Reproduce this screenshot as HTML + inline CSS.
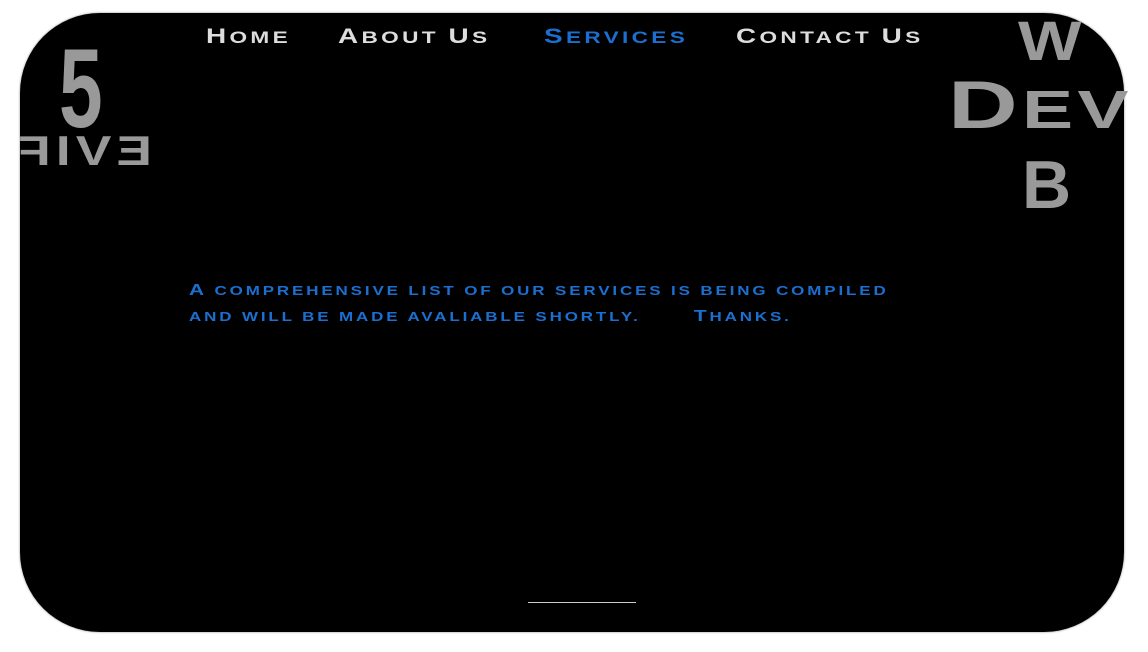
<!DOCTYPE html>
<html><head><meta charset="utf-8"><style>
html,body{margin:0;padding:0;background:#fff;width:1148px;height:652px;overflow:hidden;position:relative;font-family:"Liberation Sans",sans-serif}
.box{position:absolute;left:20px;top:13px;width:1104px;height:619px;background:#000;border-radius:80px;box-shadow:0 0 2px #888}
.t{position:absolute;white-space:nowrap;text-transform:uppercase;transform-origin:0 0}
.nav{top:25px;font-size:17px;color:#ddd;letter-spacing:2.5px;transform:scaleX(1.33);font-weight:bold}
.nav i{font-style:normal;font-size:21px}
.b{color:#1b6fd0}
.p{font-size:13px;color:#1b6fd0;letter-spacing:2.2px;transform:scaleX(1.305);font-weight:bold}
.p i{font-style:normal;font-size:16px}
.g{position:absolute;color:#999;white-space:nowrap;transform-origin:0 0}
</style></head><body>
<div class="box"></div>
<div class="t nav" style="left:206px"><i>H</i>ome</div>
<div class="t nav" style="left:338px"><i>A</i>bout <i>U</i>s</div>
<div class="t nav b" style="left:544px"><i>S</i>ervices</div>
<div class="t nav" style="left:736px"><i>C</i>ontact <i>U</i>s</div>
<div class="g" style="left:59px;top:24px;font-size:112px;font-weight:bold;transform:scaleX(0.7);font-family:'Liberation Sans Narrow','Liberation Sans',sans-serif">5</div>
<div class="g" style="left:152px;top:127px;font-size:42px;transform:scaleX(-1.27);font-weight:bold;letter-spacing:4px">EVIF</div>
<div class="g" style="left:1018px;top:8px;font-size:56px;font-weight:bold;transform:scaleX(1.2)">W</div>
<div class="g" style="left:948px;top:66px;font-size:68px;font-weight:bold;transform:scaleX(1.42);letter-spacing:3px">D<span style="font-size:54px">EV</span></div>
<div class="g" style="left:1022px;top:146px;font-size:68px;font-weight:bold">B</div>
<div class="t p" style="left:189px;top:282px"><i>A</i> comprehensive list of our services is being compiled</div>
<div class="t p" style="left:189px;top:308px">and will be made avaliable shortly.&nbsp;&nbsp;&nbsp;&nbsp;&nbsp;&nbsp;&nbsp;<i>T</i>hanks.</div>
<div style="position:absolute;left:528px;top:602px;width:108px;height:1px;background:#ccc"></div>
</body></html>
